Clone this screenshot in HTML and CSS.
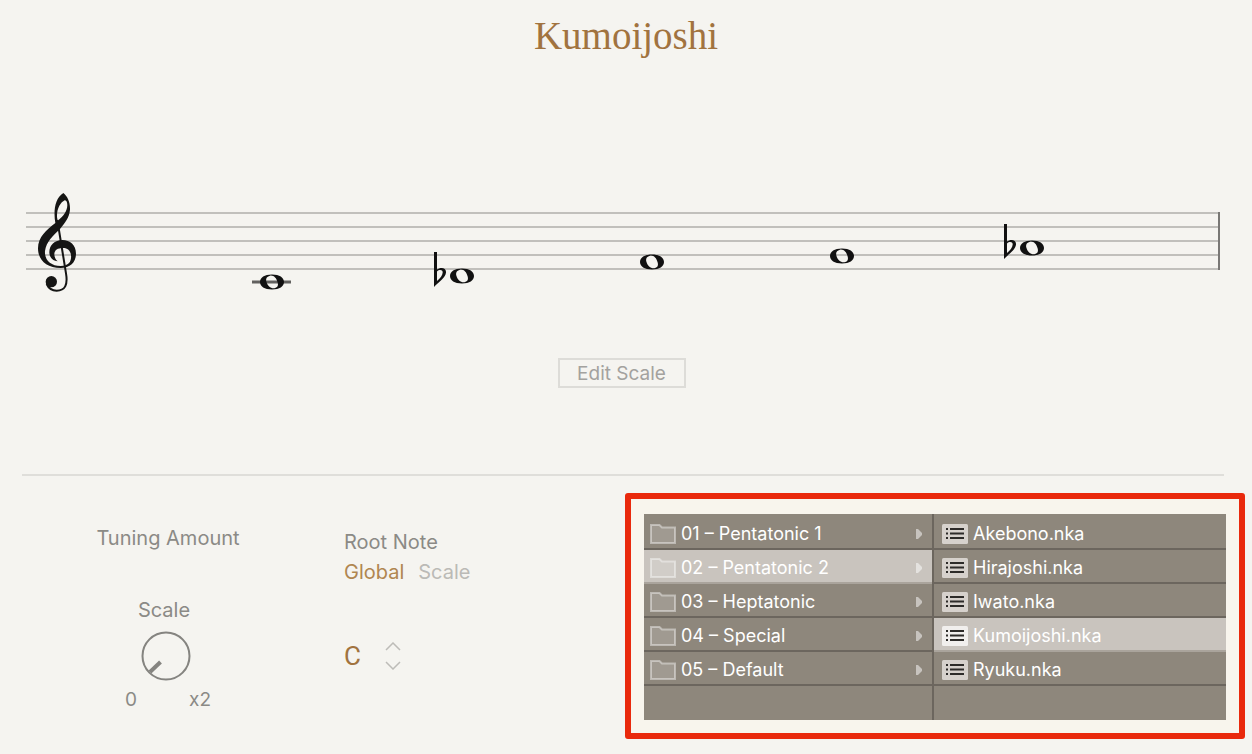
FILE: index.html
```html
<!DOCTYPE html>
<html lang="en">
<head>
<meta charset="utf-8">
<title>Kumoijoshi</title>
<link rel="stylesheet" href="styles.css">
</head>
<body>
<svg class="symbols" aria-hidden="true">
  <defs>
    <g id="whole"><path fill-rule="evenodd" d="M0-7.500C7.500-7.500 12-4.500 12 0S7.500 7.500 0 7.500-12 4.500-12 0-7.500-7.500 0-7.500ZM-2-6.300C-5.500-5.500-6.500-3-5.500 0-4.500 3.800-1 6.800 2.500 6.200 6 5.500 6.500 3 5.500 0 4.500-3.800 1.500-7-2-6.300Z"/></g>
    <g id="flat"><path fill-rule="evenodd" d="M0 0H3V17.500C6 15 12.500 15 12 20.500 11.500 26 5 29.500 0 35ZM3 19.500V29C6 26.500 8.500 23.500 8.700 20.500 8.800 17.500 5 17.500 3 19.500Z"/></g>
    <symbol id="folder" viewBox="0 0 26 20"><path d="M1 1H9.500L12 3.500H25V19H1Z" fill="#fff" fill-opacity=".16" stroke="#fff" stroke-opacity=".42" stroke-width="2"/></symbol>
    <symbol id="file" viewBox="0 0 26 20"><rect width="26" height="20" rx="1.500"/><path d="M4 5H6M8 5H22M4 9.500H6M8 9.500H22M4 14H6M8 14H22" stroke="#2d2b29" stroke-width="2"/></symbol>
    <symbol id="arrow" viewBox="0 0 6 12"><path d="M0 1H2L6 5V7L2 11H0Z" fill="#fff" fill-opacity=".5"/></symbol>
  </defs>
</svg>
<main class="page">
  <h1 class="title">Kumoijoshi</h1>
  <svg class="staff" viewBox="0 0 1194 110" role="img" aria-label="Kumoijoshi scale: C, D flat, F, G, A flat">
    <path d="M0 23H1194M0 37H1194M0 51H1194M0 65H1194M0 79H1194" stroke="#c1c0bc" stroke-width="2"/>
    <path d="M1193 22V80" stroke="#797875" stroke-width="2"/>
    <g transform="translate(-6 -5) scale(.3333)" fill="#151514">
      <path fill-rule="evenodd" d="M130 24C142 34 151 50 150 74 148 97 135 114 120 132 99 152 79 170 75 198 73 225 92 243 122 243 148 243 155 228 153 210 151 196 142 189 130 189 112 189 104 195 103 207 103 217 107 224 113 229 98 228 88 216 88 202 88 180 104 165 127 165 150 165 168 180 168 206 168 232 150 249 122 249 80 249 54 225 54 190 54 155 80 135 106 114 100 80 104 40 130 24ZM134 46C122 52 110 70 111 96L113 107C130 95 142 77 142 60 142 50 138 46 134 46Z"/>
      <path d="M112 105L138 265C144 300 135 317 110 317 95 317 85 308 80 297" fill="none" stroke="#151514" stroke-width="6"/>
      <circle cx="94" cy="290" r="17"/>
    </g>
    <path d="M226 92H265" stroke="#62615f" stroke-width="3"/>
    <g fill="#111">
      <use href="#whole" x="246" y="92"/>
      <use href="#flat" x="408" y="62"/><use href="#whole" x="436" y="86"/>
      <use href="#whole" x="626" y="72"/>
      <use href="#whole" x="816" y="66"/>
      <use href="#flat" x="978" y="34"/><use href="#whole" x="1006" y="58"/>
    </g>
  </svg>
  <button class="edit" type="button">Edit Scale</button>
  <hr class="rule">
  <div class="controls">
    <section class="tuning">
      <h2 class="label">Tuning Amount</h2>
      <label class="label knob-label" for="amount">Scale</label>
      <div class="knob">
        <svg class="knob-face" viewBox="0 0 50 50" aria-hidden="true"><circle cx="25" cy="25" r="23.500" fill="none" stroke="#858480" stroke-width="2"/><path d="M9 41L19.500 31" stroke="#858480" stroke-width="4"/></svg>
        <input class="knob-input" id="amount" type="range" min="0" max="2" step="0.01" value="0">
      </div>
      <div class="range"><span>0</span><span>x2</span></div>
    </section>
    <section class="root">
      <h2 class="label">Root Note</h2>
      <div class="modes">
        <button class="mode mode-on" type="button" aria-pressed="true">Global</button>
        <button class="mode" type="button" aria-pressed="false">Scale</button>
      </div>
      <div class="note">
        <span class="note-name">C</span>
        <span class="stepper">
          <button class="step" type="button" aria-label="Note up"><svg width="16" height="9" viewBox="0 0 16 9"><path d="M1 8L8 1 15 8"/></svg></button>
          <button class="step" type="button" aria-label="Note down"><svg width="16" height="9" viewBox="0 0 16 9"><path d="M1 1L8 8 15 1"/></svg></button>
        </span>
      </div>
    </section>
    <section class="frame" aria-label="Presets">
      <div class="browser">
        <div class="column folders">
          <button class="row" type="button"><svg class="icon"><use href="#folder"/></svg><span class="name">01 – Pentatonic 1</span><svg class="arrow"><use href="#arrow"/></svg></button>
          <button class="row row-on" type="button"><svg class="icon"><use href="#folder"/></svg><span class="name">02 – Pentatonic 2</span><svg class="arrow"><use href="#arrow"/></svg></button>
          <button class="row" type="button"><svg class="icon"><use href="#folder"/></svg><span class="name">03 – Heptatonic</span><svg class="arrow"><use href="#arrow"/></svg></button>
          <button class="row" type="button"><svg class="icon"><use href="#folder"/></svg><span class="name">04 – Special</span><svg class="arrow"><use href="#arrow"/></svg></button>
          <button class="row" type="button"><svg class="icon"><use href="#folder"/></svg><span class="name">05 – Default</span><svg class="arrow"><use href="#arrow"/></svg></button>
        </div>
        <div class="column files">
          <button class="row" type="button"><svg class="icon"><use href="#file"/></svg><span class="name">Akebono.nka</span></button>
          <button class="row" type="button"><svg class="icon"><use href="#file"/></svg><span class="name">Hirajoshi.nka</span></button>
          <button class="row" type="button"><svg class="icon"><use href="#file"/></svg><span class="name">Iwato.nka</span></button>
          <button class="row row-on" type="button"><svg class="icon"><use href="#file"/></svg><span class="name">Kumoijoshi.nka</span></button>
          <button class="row" type="button"><svg class="icon"><use href="#file"/></svg><span class="name">Ryuku.nka</span></button>
        </div>
      </div>
    </section>
  </div>
</main>
</body>
</html>
```
FILE: styles.css
```css
* { box-sizing: border-box; }
body { margin: 0; background: #f5f4f0; color: #8b8a86; font-family: Inter, Roboto, sans-serif; font-size: 20px; line-height: 24px; }
button { margin: 0; padding: 0; border: 0; background: none; color: inherit; font: inherit; cursor: pointer; }
.symbols { position: absolute; width: 0; height: 0; }
.page { display: flex; flex-direction: column; padding: 14px 7px 16px 22px; }
.title { margin: 0 0 132px; padding-right: 15px; color: #a1733f; font: 400 39px/44px "Liberation Serif", serif; text-align: center; }
.staff { display: block; margin: 0 25px 0 4px; }
.edit { align-self: center; width: 128px; height: 30px; margin: 58px 24px 0 0; padding-top: 2px; border: 2px solid #dddcd8; color: #a3a29e; font-size: 19px; }
.rule { align-self: stretch; height: 2px; margin: 86px 21px 17px 0; border: 0; background: #dfdeda; }
.controls { display: grid; grid-template-columns: 292fr 311fr 620fr; }
.label { margin: 0; font-size: 20px; font-weight: 400; line-height: 24px; }
.tuning { display: flex; flex-direction: column; align-items: center; padding-top: 33px; }
.knob-label { margin: 48px 8px 0 0; }
.knob { position: relative; width: 50px; height: 50px; margin: 9px 4px 0 0; }
.knob-face { display: block; width: 50px; height: 50px; }
.knob-input { position: absolute; inset: 0; width: 100%; height: 100%; margin: 0; opacity: 0; }
.range { display: flex; justify-content: space-between; width: 86px; margin-top: 7px; font-size: 19px; }
.root { padding: 37px 0 0 30px; }
.modes { display: flex; gap: 14px; margin-top: 6px; }
.mode { color: #bbbab6; }
.mode-on { color: #b08650; }
.note { display: flex; align-items: center; gap: 24px; margin-top: 56px; }
.note-name { color: #a1733f; font: 400 26px/32px Roboto, sans-serif; }
.stepper { display: flex; flex-direction: column; gap: 10px; }
.step { display: block; height: 9px; line-height: 0; }
.step svg { fill: none; stroke: #bdbcb8; stroke-width: 1.5; }
.frame { padding: 15px 13px 13px; border: 6px solid #e9290c; border-radius: 3px; background: #f8f5ed; }
.browser { display: grid; grid-template-columns: 290fr 292fr; background: #8e877c; color: #fff; }
.column { min-width: 0; padding: 2px 0 34px; }
.folders { border-right: 2px solid #6c665e; }
.row { display: flex; align-items: center; gap: 5px; width: 100%; height: 34px; padding: 3px 10px 0 6px; border-bottom: 2px solid #6c665e; text-align: left; }
.files .row { padding-left: 8px; }
.row-on { border-bottom-color: #aaa49c; background: #c9c4be; }
.icon { flex: none; width: 26px; height: 20px; fill: #d6d1cc; }
.row-on .icon { fill: #f1efed; }
.name { flex: 1; font-size: 18px; white-space: nowrap; }
.arrow { flex: none; width: 6px; height: 12px; }
```
